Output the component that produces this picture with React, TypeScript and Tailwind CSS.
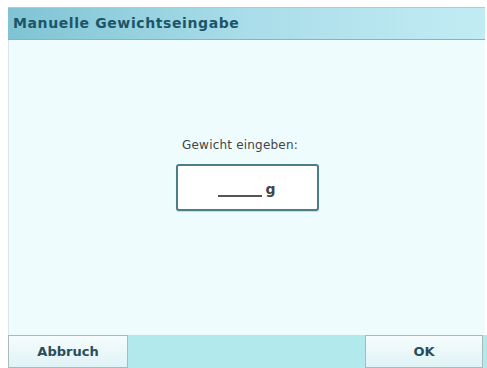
import React from 'react';

export default function App() {
  return (
    <div className="w-[487px] h-[368px] bg-white pt-[7px] pl-[8px] pr-[2px] flex flex-col overflow-hidden" style={{ fontFamily: '"DejaVu Sans", "Liberation Sans", sans-serif' }}>
      {/* Title bar */}
      <div className="h-[33px] shrink-0 flex items-center pl-[5px] border-t border-[#b8c8cc] border-b border-b-[#8fb2ba] bg-gradient-to-r from-[#7fc4d4] via-[#a9dde9] to-[#c2ecf4]">
        <span className="text-[14px] font-bold text-[#1d5568] tracking-[0.6px]">Manuelle Gewichtseingabe</span>
      </div>

      {/* Content */}
      <div className="flex-1 bg-[#effcfd] border-l border-[#dbe8ea] flex flex-col items-center pt-[96px]">
        <div className="text-[12px] text-[#444] tracking-[0.2px] -ml-[14px]">Gewicht eingeben:</div>
        <div className="mt-[10px] w-[143px] h-[47px] border-2 border-[#4d7d8b] rounded-[3px] bg-white flex items-center justify-center shadow-[0_1px_1px_rgba(0,0,0,0.15)]">
          <div className="flex items-end gap-[3px] pt-[6px]">
            <span className="block w-[44px] h-[2px] bg-[#555] mb-[3px]" />
            <span className="text-[14px] font-bold text-[#444] leading-none mb-[4px]">g</span>
          </div>
        </div>
      </div>

      {/* Bottom bar */}
      <div className="h-[33px] shrink-0 flex bg-[#b2e9ec] -mr-[2px]">
        <button className="w-[120px] h-full border border-[#a9b9bc] bg-gradient-to-b from-[#f6fcfd] to-[#dff3f6] text-[13px] font-bold text-[#2a4d5a]">
          Abbruch
        </button>
        <div className="flex-1" />
        <button className="w-[118px] h-full mr-[4px] border border-[#a9b9bc] bg-gradient-to-b from-[#f6fcfd] to-[#dff3f6] text-[13px] font-bold text-[#2a4d5a]">
          OK
        </button>
      </div>
    </div>
  );
}
